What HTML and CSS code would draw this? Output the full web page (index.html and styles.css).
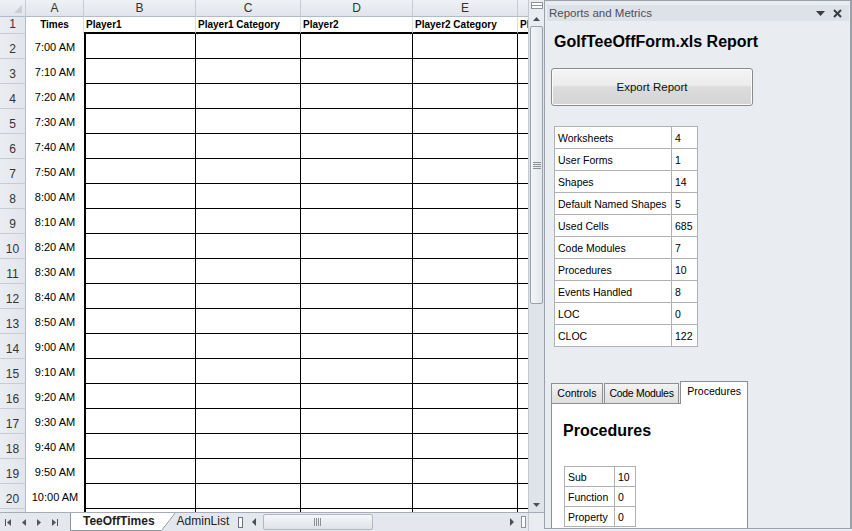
FILE: index.html
```html
<!DOCTYPE html>
<html>
<head>
<meta charset="utf-8">
<title>GolfTeeOffForm.xls</title>
<link rel="stylesheet" href="styles.css">
</head>
<body>
<div class="app">
  <div class="excel">
    <div class="sheetarea">
      <div class="sheet">
        <div class="grid">
          <div class="ch corner"><span class="corner-tri"></span></div><div class="ch">A</div><div class="ch">B</div><div class="ch">C</div><div class="ch">D</div><div class="ch">E</div><div class="ch">F</div>
          <div class="rh">1</div><div class="h1 hta">Times</div><div class="h1">Player1</div><div class="h1">Player1 Category</div><div class="h1">Player2</div><div class="h1">Player2 Category</div><div class="h1">Player3</div>
          <div class="rh">2</div><div class="ta">7:00 AM</div><div class="d b"></div><div class="d"></div><div class="d"></div><div class="d"></div><div class="d f"></div>
          <div class="rh">3</div><div class="ta">7:10 AM</div><div class="d b"></div><div class="d"></div><div class="d"></div><div class="d"></div><div class="d f"></div>
          <div class="rh">4</div><div class="ta">7:20 AM</div><div class="d b"></div><div class="d"></div><div class="d"></div><div class="d"></div><div class="d f"></div>
          <div class="rh">5</div><div class="ta">7:30 AM</div><div class="d b"></div><div class="d"></div><div class="d"></div><div class="d"></div><div class="d f"></div>
          <div class="rh">6</div><div class="ta">7:40 AM</div><div class="d b"></div><div class="d"></div><div class="d"></div><div class="d"></div><div class="d f"></div>
          <div class="rh">7</div><div class="ta">7:50 AM</div><div class="d b"></div><div class="d"></div><div class="d"></div><div class="d"></div><div class="d f"></div>
          <div class="rh">8</div><div class="ta">8:00 AM</div><div class="d b"></div><div class="d"></div><div class="d"></div><div class="d"></div><div class="d f"></div>
          <div class="rh">9</div><div class="ta">8:10 AM</div><div class="d b"></div><div class="d"></div><div class="d"></div><div class="d"></div><div class="d f"></div>
          <div class="rh">10</div><div class="ta">8:20 AM</div><div class="d b"></div><div class="d"></div><div class="d"></div><div class="d"></div><div class="d f"></div>
          <div class="rh">11</div><div class="ta">8:30 AM</div><div class="d b"></div><div class="d"></div><div class="d"></div><div class="d"></div><div class="d f"></div>
          <div class="rh">12</div><div class="ta">8:40 AM</div><div class="d b"></div><div class="d"></div><div class="d"></div><div class="d"></div><div class="d f"></div>
          <div class="rh">13</div><div class="ta">8:50 AM</div><div class="d b"></div><div class="d"></div><div class="d"></div><div class="d"></div><div class="d f"></div>
          <div class="rh">14</div><div class="ta">9:00 AM</div><div class="d b"></div><div class="d"></div><div class="d"></div><div class="d"></div><div class="d f"></div>
          <div class="rh">15</div><div class="ta">9:10 AM</div><div class="d b"></div><div class="d"></div><div class="d"></div><div class="d"></div><div class="d f"></div>
          <div class="rh">16</div><div class="ta">9:20 AM</div><div class="d b"></div><div class="d"></div><div class="d"></div><div class="d"></div><div class="d f"></div>
          <div class="rh">17</div><div class="ta">9:30 AM</div><div class="d b"></div><div class="d"></div><div class="d"></div><div class="d"></div><div class="d f"></div>
          <div class="rh">18</div><div class="ta">9:40 AM</div><div class="d b"></div><div class="d"></div><div class="d"></div><div class="d"></div><div class="d f"></div>
          <div class="rh">19</div><div class="ta">9:50 AM</div><div class="d b"></div><div class="d"></div><div class="d"></div><div class="d"></div><div class="d f"></div>
          <div class="rh">20</div><div class="ta">10:00 AM</div><div class="d b"></div><div class="d"></div><div class="d"></div><div class="d"></div><div class="d f"></div>
          <div class="rh">21</div><div class="ta">10:10 AM</div><div class="d b"></div><div class="d"></div><div class="d"></div><div class="d"></div><div class="d f"></div>
        </div>
      </div>
      <div class="vscroll">
        <div class="vsplit"><span class="splitbox"></span></div>
        <div class="sbtn"><svg width="7" height="4" viewBox="0 0 7 4"><polygon points="0,4 7,4 3.5,0" fill="#4a4f57"/></svg></div>
        <div class="vthumb"><svg width="8" height="7" viewBox="0 0 8 7"><path d="M0 0.5H8M0 2.5H8M0 4.5H8M0 6.5H8" stroke="#8a919b" stroke-width="1"/></svg></div>
        <div class="vtrack"></div>
        <div class="sbtn"><svg width="7" height="4" viewBox="0 0 7 4"><polygon points="0,0 7,0 3.5,4" fill="#4a4f57"/></svg></div>
      </div>
    </div>
    <div class="tabbar">
      <div class="nav">
        <svg width="6" height="7" viewBox="0 0 6 7"><rect x="0" y="0" width="1" height="7" fill="#555"/><polygon points="6,0 6,7 2,3.5" fill="#555"/></svg>
        <svg width="4" height="7" viewBox="0 0 4 7"><polygon points="4,0 4,7 0,3.5" fill="#555"/></svg>
        <svg width="4" height="7" viewBox="0 0 4 7"><polygon points="0,0 0,7 4,3.5" fill="#555"/></svg>
        <svg width="6" height="7" viewBox="0 0 6 7"><polygon points="0,0 0,7 4,3.5" fill="#555"/><rect x="5" y="0" width="1" height="7" fill="#555"/></svg>
      </div>
      <div class="stab active"><span class="lbl">TeeOffTimes</span><span class="slant"></span></div>
      <div class="stab"><span class="lbl">AdminList</span></div>
      <div class="handle"><span class="handlebox"></span></div>
      <div class="hscroll">
        <div class="hbtn"><svg width="4" height="8" viewBox="0 0 4 8"><polygon points="4,0 4,8 0,4" fill="#4a4f57"/></svg></div>
        <div class="hthumb"><svg width="9" height="8" viewBox="0 0 9 8"><path d="M0.5 0V8M2.5 0V8M4.5 0V8M6.5 0V8" stroke="#8a919b" stroke-width="1"/></svg></div>
        <div class="htrack"></div>
        <div class="hbtn"><svg width="4" height="8" viewBox="0 0 4 8"><polygon points="0,0 0,8 4,4" fill="#4a4f57"/></svg></div>
        <div class="hsplit"><span class="hsplitbox"></span></div>
      </div>
      <div class="sbcorner"></div>
    </div>
  </div>
  <div class="panel">
    <div class="pane-title">
      <span class="pane-name">Reports and Metrics</span>
      <span class="pane-icons">
        <svg width="9" height="5" viewBox="0 0 9 5"><polygon points="0,0 9,0 4.5,5" fill="#3c3c3c"/></svg>
        <svg width="9" height="9" viewBox="0 0 9 9"><path d="M1 1L8 8M8 1L1 8" stroke="#3c3c3c" stroke-width="2"/></svg>
      </span>
    </div>
    <div class="pane-body">
      <h1 class="report-title">GolfTeeOffForm.xls Report</h1>
      <button class="export">Export Report</button>
      <table class="metrics">
        <tr><td class="k">Worksheets</td><td class="v">4</td></tr>
        <tr><td class="k">User Forms</td><td class="v">1</td></tr>
        <tr><td class="k">Shapes</td><td class="v">14</td></tr>
        <tr><td class="k">Default Named Shapes</td><td class="v">5</td></tr>
        <tr><td class="k">Used Cells</td><td class="v">685</td></tr>
        <tr><td class="k">Code Modules</td><td class="v">7</td></tr>
        <tr><td class="k">Procedures</td><td class="v">10</td></tr>
        <tr><td class="k">Events Handled</td><td class="v">8</td></tr>
        <tr><td class="k">LOC</td><td class="v">0</td></tr>
        <tr><td class="k">CLOC</td><td class="v">122</td></tr>
      </table>
      <div class="tabs">
        <div class="tabstrip">
          <div class="tab t-controls">Controls</div>
          <div class="tab t-modules">Code Modules</div>
          <div class="tab t-procs active">Procedures</div>
        </div>
        <div class="tabpage">
          <h2 class="page-title">Procedures</h2>
          <table class="procs">
            <tr><td class="k">Sub</td><td class="v">10</td></tr>
            <tr><td class="k">Function</td><td class="v">0</td></tr>
            <tr><td class="k">Property</td><td class="v">0</td></tr>
          </table>
        </div>
      </div>
    </div>
  </div>
</div>
</body>
</html>
```

FILE: styles.css
```css
* { box-sizing: border-box; }
html, body { margin: 0; padding: 0; }
body {
  width: 852px;
  height: 531px;
  overflow: hidden;
  background: #e9ecf1;
  font-family: "Liberation Sans", Arial, sans-serif;
  color: #000;
}
.app { display: flex; width: 852px; height: 531px; }

/* ---------- Excel side ---------- */
.excel { width: 544px; display: flex; flex-direction: column; }
.sheetarea { display: flex; height: 512px; }
.sheet { width: 528px; height: 512px; overflow: hidden; background: #fff; }
.grid {
  display: grid;
  width: 558px;
  grid-template-columns: 26px 58px 112px 105px 112px 105px 40px;
  grid-template-rows: 17px 17px;
  grid-auto-rows: 25px;
}
.ch {
  background: linear-gradient(#eef1f5, #e1e5eb);
  border-right: 1px solid #c7ccd3;
  border-bottom: 1px solid #b3bbc6;
  font-size: 12px;
  line-height: 16px;
  text-align: center;
  color: #333;
}
.corner { display: flex; align-items: flex-end; justify-content: flex-end; padding: 0 3px 3px 0; }
.corner-tri {
  width: 0; height: 0;
  border-left: 8px solid transparent;
  border-bottom: 8px solid #c9ced6;
}
.rh {
  background: linear-gradient(90deg, #eaedf1, #e2e6ec);
  border-right: 1px solid #b3bbc6;
  border-bottom: 1px solid #c7ccd3;
  font-size: 12px;
  line-height: 14px;
  color: #333;
  display: flex;
  align-items: flex-end;
  justify-content: center;
  padding-bottom: 2px;
}
.h1 {
  font-weight: bold;
  font-size: 10px;
  line-height: 15px;
  padding-left: 2px;
  white-space: nowrap;
  overflow: hidden;
  border-right: 1px solid #dadcdd;
  border-bottom: 2px solid #000;
}
.h1.hta { text-align: center; padding-left: 0; border-bottom: 1px solid #fff; border-right: 1px solid #dadcdd; }
.ta {
  font-size: 11px;
  display: flex;
  align-items: center;
  justify-content: center;
  white-space: nowrap;
  padding-top: 1px;
}
.d { border-right: 1px solid #000; border-bottom: 1px solid #000; }
.d.b { border-left: 2px solid #000; }
.d.f { border-right: none; }

/* vertical scrollbar */
.vscroll {
  width: 16px;
  height: 512px;
  background: #dfe3ea;
  border-left: 1px solid #c5cad1;
  display: flex;
  flex-direction: column;
}
.vsplit { height: 11px; display: flex; justify-content: center; padding-top: 2px; background: #e9ecf0; }
.splitbox {
  width: 12px; height: 7px;
  background: #fff;
  border: 1px solid #8c939d;
  box-shadow: inset 0 2px 0 #fff, inset 0 3px 0 #8c939d;
}
.sbtn { height: 15px; display: flex; align-items: center; justify-content: center; }
.vsplit + .sbtn { background: #e9ecf0; }
.vthumb {
  height: 278px;
  margin: 0 1px;
  border: 1px solid #9aa1ab;
  border-radius: 2px;
  background: linear-gradient(90deg, #f3f5f8, #e3e7ed);
  display: flex;
  align-items: flex-start;
  justify-content: center;
  padding-top: 135px;
}
.vtrack { flex: 1; }

/* sheet tab bar */
.tabbar {
  height: 19px;
  display: flex;
  background: #e4e8ee;
  border-top: 1px solid #a6adb7;
}
.nav {
  width: 70px;
  display: flex;
  align-items: center;
  gap: 11px;
  padding-left: 5px;
}
.stab { display: flex; height: 18px; font-size: 12px; }
.stab .lbl { padding: 0 4px 0 12px; line-height: 17px; color: #222; white-space: nowrap; }
.stab.active .lbl {
  background: #fff;
  font-weight: bold;
  border-left: 1px solid #8e959f;
  border-bottom: 1px solid #8e959f;
  padding-left: 12px;
  padding-right: 6px;
}
.stab .slant {
  width: 14px;
  background: linear-gradient(to bottom right, #fff calc(50% - 0.6px), #8e959f 50%, transparent calc(50% + 0.8px));
}
.stab:not(.active) .lbl { padding-left: 2px; }
.handle { width: 14px; display: flex; align-items: center; justify-content: center; }
.handlebox { width: 5px; height: 11px; background: #fff; border: 1px solid #6d737c; }
.hscroll { flex: 1; display: flex; align-items: stretch; }
.hbtn { width: 14px; display: flex; align-items: center; justify-content: center; }
.hthumb {
  width: 110px;
  margin: 1px 0 1px 2px;
  border: 1px solid #b2b8c1;
  border-radius: 2px;
  background: linear-gradient(#f5f6f8, #dfe3e9);
  display: flex;
  align-items: center;
  justify-content: center;
}
.htrack { flex: 1; }
.hsplit { width: 9px; display: flex; align-items: center; justify-content: center; }
.hsplitbox { width: 5px; height: 12px; background: #fff; border: 1px solid #8c939d; }
.sbcorner { width: 16px; background: #e9ecf0; border-left: 1px solid #c5cad1; }

/* ---------- Pane ---------- */
.panel {
  width: 308px;
  height: 529px;
  border: 1px solid #9aa1ab;
  border-right-width: 2px;
  background: #e9ecf1;
  padding: 4px 1px 0 2px;
  display: flex;
  flex-direction: column;
}
.pane-title {
  height: 17px;
  background: #dde1e8;
  display: flex;
  align-items: center;
  justify-content: space-between;
  padding: 0 7px 0 2px;
}
.pane-name { font-size: 11.5px; color: #4b4f56; }
.pane-icons { display: flex; align-items: center; gap: 8px; }
.pane-body { padding-left: 4px; display: flex; flex-direction: column; align-items: flex-start; }
.report-title {
  margin: 11px 0 0 3px;
  font-size: 16px;
  line-height: 20px;
  font-weight: bold;
}
.export {
  margin-top: 16px;
  width: 202px;
  height: 38px;
  border: 1px solid #8a8a8a;
  border-radius: 3px;
  background: linear-gradient(#f4f4f4 0%, #ececec 45%, #dcdcdc 50%, #d4d4d4 100%);
  font-family: "Liberation Sans", Arial, sans-serif;
  font-size: 11.5px;
  color: #111;
  box-shadow: inset 0 0 0 1px #fbfbfb;
}
.metrics, .procs {
  border-collapse: collapse;
  background: #fff;
  font-size: 10.5px;
}
.metrics { margin: 20px 0 0 3px; }
.metrics td, .procs td {
  border: 1px solid #aeb1b5;
  padding: 0 3px;
  white-space: nowrap;
}
.metrics td { height: 22px; }
.metrics td.k { width: 117px; }
.metrics td.v { width: 26px; }

.tabs { margin-top: 34px; width: 197px; }
.tabstrip { display: flex; align-items: flex-end; height: 22px; }
.tab {
  height: 20px;
  border: 1px solid #8c8f94;
  border-bottom: none;
  background: linear-gradient(#f3f3f3, #dedede);
  font-size: 10.5px;
  line-height: 19px;
  padding: 0;
  text-align: center;
  margin-right: 1px;
  white-space: nowrap;
}
.t-controls { width: 52px; }
.t-modules { width: 76px; letter-spacing: -0.3px; }
.t-procs { width: 68px; }
.tab.active {
  height: 23px;
  background: #fff;
  margin-bottom: -1px;
  position: relative;
  z-index: 1;
  line-height: 18px;
  margin-right: 0;
}
.tabpage {
  height: 125px;
  border: 1px solid #8c8f94;
  border-bottom: none;
  background: #fff;
  overflow: hidden;
  padding-left: 11px;
}
.page-title {
  margin: 17px 0 0 0;
  font-size: 16px;
  line-height: 20px;
  font-weight: bold;
}
.procs { margin: 25px 0 0 1px; }
.procs td { height: 20px; }
.procs td.k { width: 50px; }
.procs td.v { width: 21px; }
```
